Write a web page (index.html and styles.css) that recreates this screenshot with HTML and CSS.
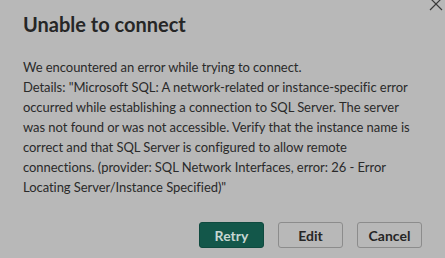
FILE: index.html
```html
<!DOCTYPE html>
<html>
<head>
<meta charset="utf-8">
<link rel="stylesheet" href="styles.css">
</head>
<body>
<div class="dialog">
  <svg class="close" width="14" height="14" viewBox="0 0 14 14"><path d="M1 1 L13 13 M13 1 L1 13" stroke="#3a3a3a" stroke-width="1.2" fill="none"/></svg>
  <h1 class="title">Unable to connect</h1>
  <div class="message">
    <div>We encountered an error while trying to connect.</div>
    <div>Details: "Microsoft SQL: A network-related or instance-specific error<br>occurred while establishing a connection to SQL Server. The server<br>was not found or was not accessible. Verify that the instance name is<br>correct and that SQL Server is configured to allow remote<br>connections. (provider: SQL Network Interfaces, error: 26 - Error<br>Locating Server/Instance Specified)"</div>
  </div>
  <div class="actions">
    <button class="btn primary">Retry</button>
    <button class="btn">Edit</button>
    <button class="btn">Cancel</button>
  </div>
</div>
</body>
</html>
```
FILE: styles.css
```css
html, body {
  margin: 0;
  padding: 0;
  background: #b8b8b8;
  width: 445px;
  height: 258px;
  overflow: hidden;
}
.dialog {
  position: relative;
  box-sizing: border-box;
  width: 445px;
  height: 258px;
  padding: 10px 23px 0 23px;
  font-family: "Lato", sans-serif;
  color: #2a2a2a;
}
.close {
  position: absolute;
  right: 2px;
  top: -3px;
}
.title {
  margin: 0;
  font-size: 20px;
  font-weight: 700;
  line-height: 28px;
  color: #262626;
}
.message {
  margin-top: 19px;
  font-size: 13px;
  line-height: 20px;
  white-space: nowrap;
  letter-spacing: -0.05px;
}
.actions {
  display: flex;
  justify-content: flex-end;
  gap: 14px;
  margin-top: 25px;
}
.btn {
  box-sizing: border-box;
  width: 65px;
  height: 26px;
  border: 1px solid #8c8c8c;
  border-radius: 3px;
  background: #b8b8b8;
  font-family: "Lato", sans-serif;
  font-size: 14px;
  font-weight: 700;
  color: #262626;
  padding: 0;
}
.btn.primary {
  background: #13574a;
  border-color: #0f4a3f;
  color: #c6d6d2;
}
```
